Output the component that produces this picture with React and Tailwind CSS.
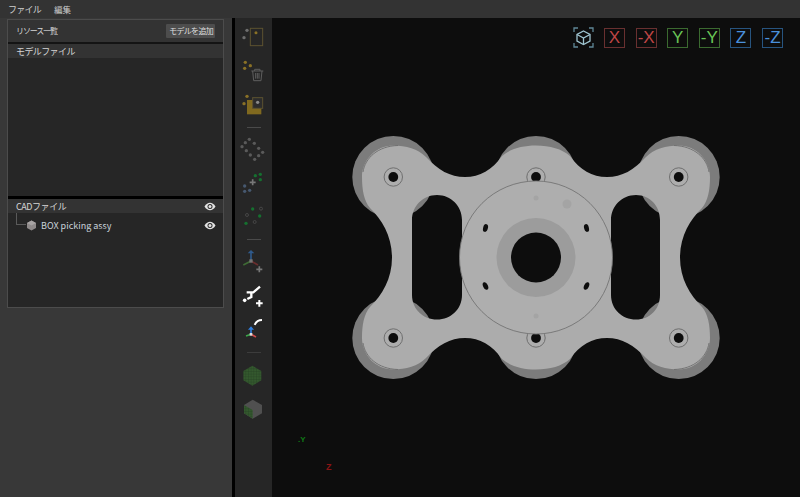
const jp = { fontFamily: '"Noto Sans CJK JP", "Liberation Sans", sans-serif' };

function Eye() {
  return (
    <svg width="12" height="9" viewBox="0 0 12 9" className="block">
      <path d="M0.5 4.5C2 2 4 .8 6 .8s4 1.2 5.5 3.7C10 7 8 8.2 6 8.2S2 7 .5 4.5z" fill="#e4e4e4" />
      <circle cx="6" cy="4.5" r="2.5" fill="#2a2a2a" />
      <circle cx="6" cy="4.5" r="1.5" fill="#e4e4e4" />
    </svg>
  );
}

function Icon({ y0, h, oy, children }) {
  return (
    <svg width="37" height={h} viewBox={`235 ${y0} 37 ${h}`} className="block shrink-0">
      <g transform={`translate(232 ${oy}) scale(0.3333)`}>{children}</g>
    </svg>
  );
}

const Dots = ({ pts, fill, r = 5 }) => pts.map(([x, y], i) => <circle key={i} cx={x} cy={y} r={r} fill={fill} />);

const Plus = ({ x, y, c, s = 9, w = 5 }) => (
  <path d={`M${x - s} ${y}H${x + s}M${x} ${y - s}V${y + s}`} stroke={c} strokeWidth={w} fill="none" />
);

function Sep({ dark }) {
  return <div className={`w-[14px] h-px shrink-0 ${dark ? 'bg-[#3c3c3c]' : 'bg-[#4a4a4a]'}`} />;
}

function Toolbar() {
  return (
    <div className="w-[37px] shrink-0 bg-[#262626] flex flex-col items-center">
      <Icon y0={18} h={34} oy={15}>
        <rect x="55" y="40" width="37" height="52" fill="none" stroke="#5c5230" strokeWidth="3" />
        <Dots pts={[[45, 46], [36, 68]]} fill="#6e6e6e" />
        <circle cx="72" cy="53" r="4.5" fill="#8a7126" />
      </Icon>
      <Icon y0={52} h={34} oy={15}>
        <Dots pts={[[40, 142], [55, 152], [38, 160]]} fill="#8a7126" />
        <path d="M58 168H94M68 168V163H84V168M62 168L65 197H87L90 168M71 174V191M76 174V191M81 174V191" stroke="#5e5e5e" strokeWidth="3" fill="none" />
      </Icon>
      <Icon y0={86} h={41} oy={15}>
        <rect x="45" y="255" width="43" height="43" fill="#80691f" />
        <rect x="62" y="248" width="30" height="32" fill="#2c2c2c" stroke="#5c5230" strokeWidth="3" />
        <circle cx="77" cy="262" r="5" fill="#8a8a8a" />
        <Dots pts={[[45, 244], [36, 266]]} fill="#8a7126" />
      </Icon>
      <Sep />
      <Icon y0={128} h={38} oy={130}>
        <Dots pts={[[52, 28], [40, 38], [30, 50], [67, 40], [80, 55], [92, 67], [43, 62], [55, 75], [68, 88], [80, 77]]} fill="#5a5a5a" />
      </Icon>
      <Icon y0={166} h={32} oy={130}>
        <Dots pts={[[70, 137], [85, 133], [85, 149]]} fill="#15702f" />
        <Dots pts={[[38, 168], [38, 184], [53, 181]]} fill="#46586f" />
        <Plus x={62} y={157} c="#777" />
      </Icon>
      <Icon y0={198} h={41} oy={130}>
        <Dots pts={[[62, 237], [83, 258], [42, 280]]} fill="#15702f" />
        <circle cx="87" cy="236" r="4.5" fill="none" stroke="#555" strokeWidth="2" />
        <circle cx="45" cy="255" r="4.5" fill="none" stroke="#555" strokeWidth="2" />
        <circle cx="68" cy="276" r="4.5" fill="none" stroke="#555" strokeWidth="2" />
      </Icon>
      <Sep />
      <Icon y0={240} h={39} oy={130}>
        <path d="M57 393V368" stroke="#2f5a8c" strokeWidth="5" fill="none" />
        <path d="M47 370L57 360L67 370Z" fill="#2f5a8c" />
        <path d="M57 393L34 405" stroke="#3f6b35" strokeWidth="5" fill="none" />
        <path d="M57 393L78 405" stroke="#6b2d2d" strokeWidth="5" fill="none" />
        <rect x="52" y="388" width="10" height="10" fill="#777" />
        <Plus x={82} y={418} c="#777" />
      </Icon>
      <Icon y0={279} h={34} oy={275}>
        <circle cx="38" cy="76" r="5.5" fill="#fff" />
        <path d="M44 52H64L84 35M58 50V66L46 72" stroke="#fff" strokeWidth="7" fill="none" />
        <Plus x={82} y={85} c="#fff" s={10} w={6} />
      </Icon>
      <Icon y0={313} h={39} oy={275}>
        <path d="M68 150C72 140 80 135 90 135" stroke="#fff" strokeWidth="6" fill="none" />
        <path d="M57 178V160" stroke="#2f7fe0" strokeWidth="5" fill="none" />
        <path d="M48 164L57 154L66 164Z" fill="#2f7fe0" />
        <path d="M57 178L42 183" stroke="#3aa84a" strokeWidth="5" fill="none" />
        <path d="M57 178L72 186" stroke="#d04a4a" strokeWidth="5" fill="none" />
        <rect x="53" y="174" width="8" height="8" fill="#ddd" />
      </Icon>
      <Sep dark />
      <Icon y0={353} h={39} oy={275}>
        <defs>
          <pattern id="mesh" width="8" height="8" patternUnits="userSpaceOnUse">
            <rect width="8" height="8" fill="#34592e" />
            <path d="M0 0H8M0 0V8" stroke="#243f22" strokeWidth="2" />
          </pattern>
        </defs>
        <path d="M61 272L88 288V316L61 332L34 316V288Z" fill="url(#mesh)" />
      </Icon>
      <Icon y0={392} h={34} oy={275}>
        <path d="M62 374L90 390V415L62 431L36 415V390Z" fill="#505050" />
        <path d="M36 390L62 405V431L36 415Z" fill="url(#mesh)" />
      </Icon>
    </div>
  );
}

function AxisBtn({ label, cls }) {
  return (
    <div
      className={`w-[21px] h-[20px] border flex items-center justify-center text-[17px] leading-none ${cls}`}
      style={{ fontFamily: '"Liberation Sans", sans-serif' }}
    >
      {label}
    </div>
  );
}

const lobes = [[393.3, 177], [536, 177], [678.7, 177], [393.3, 338], [536, 338], [678.7, 338]];
const bodyPath =
  'M393 145.5C406 145.5 418 149 426 157C438 170 450 177 465 177C480 177 492 170 502 156C510 149 522 145.5 536 145.5C550 145.5 562 149 570 156C580 170 592 177 607 177C622 177 634 170 646 157C654 149 666 145.5 679 145.5C696 145.5 710 160 710 177C710 190 708 201 702 208C690 220 680 236 680 257.5C680 279 690 295 702 307C708 314 710 325 710 338C710 355 696 369.5 679 369.5C666 369.5 654 366 646 358C634 345 622 338 607 338C592 338 580 345 570 359C562 366 550 369.5 536 369.5C522 369.5 510 366 502 359C492 345 480 338 465 338C450 338 438 345 426 358C418 366 406 369.5 393 369.5C376 369.5 362 355 362 338C362 325 364 314 370 307C382 295 392 279 392 257.5C392 236 382 220 370 208C364 201 362 190 362 177C362 160 376 145.5 393 145.5Z' +
  'M412 220C412 206 423 195 437 195C451 195 462 206 462 220V295C462 309 451 319.5 437 319.5C423 319.5 412 309 412 295Z' +
  'M611 220C611 206 622 195 636 195C650 195 660 206 660 220V295C660 309 650 319.5 636 319.5C622 319.5 611 309 611 295Z';

function Model() {
  return (
    <svg viewBox="272 18 528 479" className="block w-full h-full">
      {lobes.map(([x, y], i) => (
        <circle key={i} cx={x} cy={y} r="41" fill="#7c7c7c" />
      ))}
      <path d={bodyPath} fill="#acacac" fillRule="evenodd" />
      <path d="M363 172C365 158 378 146 398 145.5" fill="none" stroke="#6e6e6e" strokeWidth="0.9" />
      <path d="M709 172C707 158 694 146 674 145.5" fill="none" stroke="#6e6e6e" strokeWidth="0.9" />
      <path d="M363 343C365 357 378 369 398 369.5" fill="none" stroke="#6e6e6e" strokeWidth="0.9" />
      <path d="M709 343C707 357 694 369 674 369.5" fill="none" stroke="#6e6e6e" strokeWidth="0.9" />
      {lobes.map(([x, y], i) => (
        <g key={i}>
          <circle cx={x} cy={y} r="9.2" fill="#adadad" stroke="#6f6f6f" strokeWidth="1" />
          <circle cx={x} cy={y} r="4.9" fill="#0d0d0d" />
        </g>
      ))}
      <circle cx="536" cy="257.5" r="76.5" fill="#aeaeae" stroke="#747474" strokeWidth="0.9" />
      <circle cx="536" cy="257.5" r="39.5" fill="#9c9c9c" />
      <circle cx="536" cy="257.5" r="25" fill="#0d0d0d" />
      <circle cx="567" cy="204" r="4.5" fill="#a4a4a4" />
      <circle cx="536" cy="198" r="2.5" fill="#a4a4a4" />
      <circle cx="536" cy="316" r="2.5" fill="#a4a4a4" />
      <ellipse cx="485.5" cy="228" rx="2.4" ry="4" transform="rotate(15 485.5 228)" fill="#0d0d0d" />
      <ellipse cx="586.5" cy="228" rx="2.4" ry="4" transform="rotate(-15 586.5 228)" fill="#0d0d0d" />
      <ellipse cx="485.5" cy="286" rx="2.4" ry="4" transform="rotate(-25 485.5 286)" fill="#0d0d0d" />
      <ellipse cx="586.5" cy="286" rx="2.4" ry="4" transform="rotate(25 586.5 286)" fill="#0d0d0d" />
      <text x="298" y="442" fontSize="8" fontWeight="700" fill="#0f7a16" fontFamily="Liberation Sans, sans-serif">.Y</text>
      <text x="326" y="470" fontSize="9" fontWeight="700" fill="#8a1414" fontFamily="Liberation Sans, sans-serif">Z</text>
    </svg>
  );
}

export default function App() {
  return (
    <div className="w-[800px] h-[497px] flex flex-col overflow-hidden bg-[#383838] text-[#d6d6d6] text-[9px] leading-none" style={jp}>
      <div className="h-[18px] shrink-0 bg-[#333333] flex items-center gap-[13px] pl-[8px] text-[#cfcfcf]">
        <span className="tracking-[-0.75px]">ファイル</span>
        <span className="text-[8.5px]">編集</span>
      </div>
      <div className="flex-1 flex min-h-0">
        <div className="w-[232px] shrink-0 pl-[7px] pr-[8px] pt-px bg-[#383838]">
          <div className="h-[289px] border border-[#4c4c4c] bg-[#262626] flex flex-col">
            <div className="h-[22px] shrink-0 bg-[#333333] flex items-center justify-between pl-[8px] pr-[8px]">
              <span className="text-[8px] tracking-[-1.1px]">リソース一覧</span>
              <span className="h-[14px] pl-[3px] pr-[2px] bg-[#4d4d4d] flex items-center rounded-[1px] text-[#dddddd] text-[8px] tracking-[-0.7px]">モデルを追加</span>
            </div>
            <div className="h-[2px] shrink-0 bg-[#141414]" />
            <div className="h-[14px] shrink-0 bg-[#333333] flex items-center pl-[8px] tracking-[-0.6px]">モデルファイル</div>
            <div className="h-[138px] shrink-0" />
            <div className="h-[3px] shrink-0 bg-black" />
            <div className="h-[14px] shrink-0 bg-[#333333] flex items-center justify-between pl-[8px] pr-[7px]">
              <span className="tracking-[-0.45px]">CADファイル</span>
              <Eye />
            </div>
            <div className="relative h-[24px] shrink-0 flex items-center justify-between pl-[18px] pr-[7px] pt-[1px]">
              <div className="absolute left-[8px] top-0 w-[10px] h-[12px] border-l border-b border-[#5a5a5a]" />
              <div className="flex items-center gap-[4px]">
                <svg width="11" height="11" viewBox="0 0 11 11" className="block">
                  <path d="M5.5 .5L10 3V8L5.5 10.5L1 8V3Z" fill="#8f8a8a" />
                  <path d="M5.5 .5L10 3L5.5 5.5L1 3Z" fill="#a8a4a4" />
                </svg>
                <span className="text-[#c9d2da]">BOX picking assy</span>
              </div>
              <Eye />
            </div>
          </div>
        </div>
        <div className="w-[3px] shrink-0 bg-black" />
        <Toolbar />
        <div className="relative flex-1 min-w-0 bg-[#0d0d0d]">
          <Model />
          <div className="absolute top-[9px] right-[17px] flex items-center gap-[10.6px]">
            <svg width="21" height="21" viewBox="0 0 21 21" className="block -mr-[1px]" fill="none" stroke="#9fc4d0" strokeWidth="1.3">
              <path d="M1 5V1H5M16 1H20V5M20 16V20H16M5 20H1V16" stroke="#5f8796" />
              <path d="M10.5 4L17 7.5V14L10.5 17.5L4 14V7.5Z" />
              <path d="M4 7.5L10.5 11L17 7.5M10.5 11V17.5" />
            </svg>
            <AxisBtn label="X" cls="border-[#693030] text-[#bf4545]" />
            <AxisBtn label="-X" cls="border-[#693030] text-[#bf4545]" />
            <AxisBtn label="Y" cls="border-[#3b6a30] text-[#69c456]" />
            <AxisBtn label="-Y" cls="border-[#3b6a30] text-[#69c456]" />
            <AxisBtn label="Z" cls="border-[#27547f] text-[#4a90dc]" />
            <AxisBtn label="-Z" cls="border-[#27547f] text-[#4a90dc]" />
          </div>
        </div>
      </div>
    </div>
  );
}
